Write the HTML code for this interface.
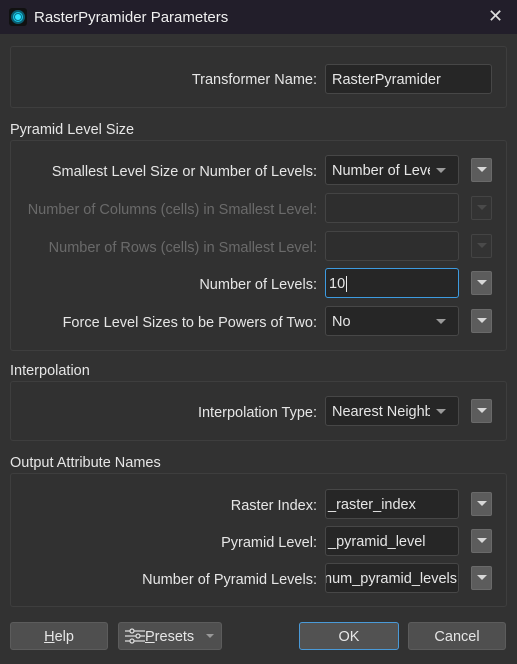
<!DOCTYPE html>
<html><head><style>
*{box-sizing:border-box;margin:0;padding:0}
body{width:517px;height:664px;background:#323232;font-family:"Liberation Sans",sans-serif;font-size:14.5px;color:#e6e6e6;position:relative;overflow:hidden}
.a{position:absolute}
.title{left:0;top:0;width:517px;height:34px;background:#221e2a}
.grp{position:absolute;left:10px;width:497px;border:1px solid #3e3e3e;border-radius:3px;background:#313131}
.lbl{position:absolute;right:200px;text-align:right;white-space:nowrap;line-height:18px;margin-top:1px}
.dis{color:#6a6a6a}
.in{position:absolute;left:325px;width:134px;height:30px;background:#262626;border:1px solid #474747;border-radius:3px;padding-left:6px;line-height:30px;white-space:nowrap;overflow:hidden}
.in.d{background:#2e2e2e;border-color:#444}
.dd{padding-right:28px}
.dd span.t{display:block;overflow:hidden;white-space:nowrap}
.dd:after{content:"";position:absolute;right:12px;top:12px;border-left:5px solid transparent;border-right:5px solid transparent;border-top:5px solid #9a9a9a}
.btn{position:absolute;left:471px;width:21px;height:24px;background:#5c5c5c;border:1px solid #6a6a6a;border-radius:2px}
.btn:after{content:"";position:absolute;left:5px;top:8px;border-left:5px solid transparent;border-right:5px solid transparent;border-top:5px solid #d8d8d8}
.btn.d{background:#333;border-color:#444}
.btn.d:after{border-top-color:#4a4a4a}
.sec{position:absolute;left:10px;line-height:18px;margin-top:1px}
.pb{position:absolute;top:622px;height:28px;background:#4f4f4f;border:1px solid #5c5c5c;border-radius:3px;text-align:center;line-height:28px;color:#e6e6e6}
</style></head><body>
<div class="a title"></div>
<div class="a" style="left:9px;top:8px;width:18px;height:18px;border-radius:3px;background:#111"></div>
<div class="a" style="left:11px;top:10px;width:14px;height:14px;border-radius:50%;background:#19c6e6;border:2px solid #0a5d70"></div>
<div class="a" style="left:14px;top:13px;width:8px;height:8px;border-radius:50%;background:#30e4ff;border:1px solid #0a7088"></div>
<div class="a" style="left:34px;top:9px;font-size:15px;color:#f0f0f0">RasterPyramider Parameters</div>
<div class="a" style="left:488px;top:6px;font-size:18px;color:#ddd">✕</div>

<div class="grp" style="top:46px;height:62px"></div>
<div class="lbl" style="top:70px">Transformer Name:</div>
<div class="in" style="top:64px;width:167px">RasterPyramider</div>

<div class="sec" style="top:120px">Pyramid Level Size</div>
<div class="grp" style="top:140px;height:211px"></div>
<div class="lbl" style="top:162px">Smallest Level Size or Number of Levels:</div>
<div class="in dd" style="top:155px"><span class="t">Number of Levels</span></div><div class="btn" style="top:158px"></div>
<div class="lbl dis" style="top:200px">Number of Columns (cells) in Smallest Level:</div>
<div class="in d" style="top:193px"></div><div class="btn d" style="top:196px"></div>
<div class="lbl dis" style="top:238px">Number of Rows (cells) in Smallest Level:</div>
<div class="in d" style="top:231px"></div><div class="btn d" style="top:234px"></div>
<div class="lbl" style="top:275px">Number of Levels:</div>
<div class="in" style="top:268px;border-color:#3d9be0;padding-left:3px">10<span style="border-left:1px solid #eee;margin-left:1px"></span></div><div class="btn" style="top:271px"></div>
<div class="lbl" style="top:313px">Force Level Sizes to be Powers of Two:</div>
<div class="in dd" style="top:306px"><span class="t">No</span></div><div class="btn" style="top:309px"></div>

<div class="sec" style="top:361px">Interpolation</div>
<div class="grp" style="top:381px;height:60px"></div>
<div class="lbl" style="top:403px">Interpolation Type:</div>
<div class="in dd" style="top:396px"><span class="t">Nearest Neighbor</span></div><div class="btn" style="top:399px"></div>

<div class="sec" style="top:453px">Output Attribute Names</div>
<div class="grp" style="top:473px;height:134px"></div>
<div class="lbl" style="top:496px">Raster Index:</div>
<div class="in" style="top:489px;padding-left:2px">_raster_index</div><div class="btn" style="top:492px"></div>
<div class="lbl" style="top:533px">Pyramid Level:</div>
<div class="in" style="top:526px;padding-left:2px">_pyramid_level</div><div class="btn" style="top:529px"></div>
<div class="lbl" style="top:570px">Number of Pyramid Levels:</div>
<div class="in" style="top:563px;padding-left:0"><span style="margin-left:-2px">num_pyramid_levels</span></div><div class="btn" style="top:566px"></div>

<div class="pb" style="left:10px;width:98px"><u>H</u>elp</div>
<div class="pb" style="left:118px;width:104px;text-align:left;padding-left:6px">
<svg width="20" height="16" style="vertical-align:-3px" viewBox="0 0 20 16" fill="none" stroke="#ddd" stroke-width="1.3"><path d="M0 3h20M0 8h20M0 13h20"/><circle cx="7" cy="3" r="2" fill="#4f4f4f"/><circle cx="13" cy="8" r="2" fill="#4f4f4f"/><circle cx="7" cy="13" r="2" fill="#4f4f4f"/></svg><u>P</u>resets <span style="display:inline-block;margin-left:8px;border-left:4px solid transparent;border-right:4px solid transparent;border-top:4px solid #999;vertical-align:3px"></span></div>
<div class="pb" style="left:299px;width:100px;border-color:#4a9ad8;background:#525252">OK</div>
<div class="pb" style="left:408px;width:98px">Cancel</div>
</body></html>
